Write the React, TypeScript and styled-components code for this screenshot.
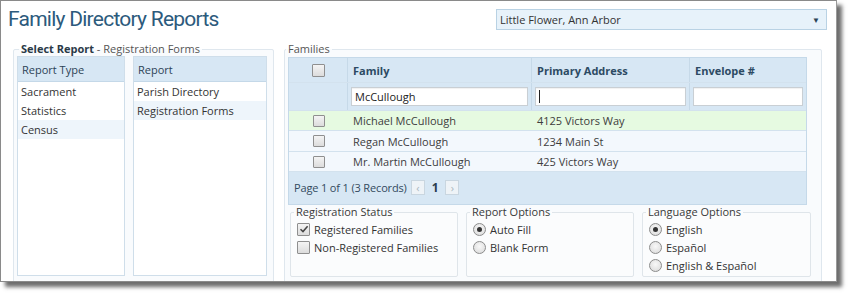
import React from "react";
import styled, { createGlobalStyle } from "styled-components";

const Global = createGlobalStyle`
  html, body { margin: 0; padding: 0; background: #ffffff; }
  body { font-family: "Open Sans", "Liberation Sans", sans-serif; font-size: 11px; color: #3a3a3a; }
  * { box-sizing: border-box; }
`;

const Stage = styled.div`
  width: 850px;
  height: 296px;
  padding: 0;
`;

const Window = styled.div`
  width: 837px;
  height: 282px;
  border: 1px solid #8a8a8a;
  border-right-color: #9a9a9a;
  background: #ffffff;
  box-shadow: 5px 5px 4px rgba(60, 60, 60, 0.75);
  overflow: hidden;
  display: flex;
  flex-direction: column;
`;

const Header = styled.div`
  height: 41px;
  display: flex;
  justify-content: space-between;
  align-items: flex-start;
  padding: 3px 9px 0 7px;
`;

const Title = styled.h1`
  margin: 0;
  font-family: "Roboto", "Open Sans", sans-serif;
  font-weight: 400;
  font-size: 21px;
  line-height: 30px;
  letter-spacing: -0.75px;
  color: #2c5a7c;
`;

const Select = styled.div`
  margin-top: 5px;
  width: 331px;
  height: 21px;
  border: 1px solid #b9d2e4;
  background: #e7f2fa;
  display: flex;
  align-items: center;
  justify-content: space-between;
  padding: 0 6px 0 3px;
  font-size: 11px;
  color: #333;
`;

const Arrow = styled.span`
  font-size: 8px;
  color: #2b4356;
`;

const Main = styled.div`
  flex: 1;
  display: flex;
  gap: 10px;
  padding: 0 0 0 12px;
  min-height: 0;
`;

const Fieldset = styled.fieldset<{ $w: number }>`
  margin: 0;
  width: ${(p) => p.$w}px;
  border: 1px solid #dfe7ee;
  border-radius: 2px;
  background: #f9fbfd;
  padding: 0 5px 10px 3px;
  display: flex;
  min-height: 260px;
`;

const Legend = styled.legend<{ $ml?: number }>`
  padding: 0 2px;
  margin-left: ${(p) => p.$ml ?? 3}px;
  font-size: 11px;
  line-height: 14px;
  color: #555;
  strong { color: #2a3a48; font-weight: 700; }
`;

const Lists = styled.div`
  display: flex;
  gap: 8px;
  height: 220px;
`;

const List = styled.div<{ $w: number }>`
  width: ${(p) => p.$w}px;
  border: 1px solid #cfdeea;
  background: #ffffff;
  display: flex;
  flex-direction: column;
`;

const ListHead = styled.div`
  height: 25px;
  background: #d7e7f4;
  border-bottom: 1px solid #c4d8e8;
  display: flex;
  align-items: center;
  padding: 0 4px;
  color: #2d4356;
  font-size: 11px;
`;

const ListBody = styled.div`
  display: flex;
  flex-direction: column;
`;

const ListItem = styled.div<{ $sel?: boolean }>`
  height: 19px;
  line-height: 19px;
  padding: 0 3px;
  background: ${(p) => (p.$sel ? "#eef5fb" : "transparent")};
  color: #333;
`;

const Right = styled.div`
  display: flex;
  flex-direction: column;
  width: 100%;
`;

const Table = styled.div`
  width: 519px;
  border: 1px solid #c5d9e9;
  margin-top: 1px;
  margin-left: 0;
`;

const Row = styled.div<{ $bg?: string; $h: number }>`
  display: grid;
  grid-template-columns: 59px 184px 158px 1fr;
  height: ${(p) => p.$h}px;
  background: ${(p) => p.$bg || "#f3f8fd"};
  border-bottom: 1px solid #d3e2ee;
`;

const HeadCell = styled.div<{ $center?: boolean }>`
  display: flex;
  align-items: center;
  justify-content: ${(p) => (p.$center ? "center" : "flex-start")};
  padding: 0 5px;
  font-weight: 700;
  color: #2c4a63;
  border-right: 1px solid #c6d9e8;
  &:last-child { border-right: none; }
`;

const FilterCell = styled.div`
  display: flex;
  align-items: center;
  padding: 0 3px;
  border-right: 1px solid #c6d9e8;
  &:last-child { border-right: none; }
`;

const Input = styled.div`
  width: 100%;
  height: 19px;
  background: #fff;
  border: 1px solid #c9cfd4;
  box-shadow: inset 0 1px 1px rgba(0, 0, 0, 0.06);
  display: flex;
  align-items: center;
  padding: 0 3px;
  color: #222;
`;

const Caret = styled.span`
  width: 1px;
  height: 13px;
  background: #222;
`;

const Cell = styled.div<{ $center?: boolean }>`
  display: flex;
  align-items: center;
  justify-content: ${(p) => (p.$center ? "center" : "flex-start")};
  padding: 0 5px;
  color: #3d3d3d;
`;

const Check = styled.span<{ $size?: number }>`
  width: ${(p) => p.$size || 12}px;
  height: ${(p) => p.$size || 12}px;
  border: 1px solid #8f8f8f;
  border-radius: 1px;
  background: linear-gradient(#f4f4f4, #dcdcdc);
  display: inline-flex;
  align-items: center;
  justify-content: center;
  flex-shrink: 0;
`;

const Pager = styled.div`
  height: 32px;
  background: #d7e7f4;
  display: flex;
  align-items: center;
  gap: 4px;
  padding: 0 4px 2px 5px;
  color: #334a5e;
  letter-spacing: -0.15px;
`;

const PageBtn = styled.span`
  width: 14px;
  height: 15px;
  border: 1px solid #c9d6e0;
  background: #eef3f7;
  color: #a9b6c0;
  font-size: 11px;
  display: inline-flex;
  align-items: center;
  justify-content: center;
`;

const PageNum = styled.span`
  font-weight: 700;
  font-size: 12px;
  color: #2a3d4e;
  padding: 0 3px;
`;

const Options = styled.div`
  display: flex;
  gap: 8px;
  margin-left: 2px;
  margin-top: 0;
`;

const OptBox = styled.fieldset<{ $w: number }>`
  margin: 0;
  width: ${(p) => p.$w}px;
  height: 72px;
  border: 1px solid #dfe5ea;
  border-radius: 2px;
  background: #fbfcfd;
  padding: 1px 6px 0 6px;
  display: flex;
  flex-direction: column;
`;

const OptLegend = styled.legend`
  padding: 0 2px;
  margin-left: -3px;
  font-size: 11px;
  color: #3a3a3a;
  line-height: 14px;
`;

const Option = styled.label`
  display: flex;
  align-items: center;
  gap: 4px;
  height: 18px;
  flex-shrink: 0;
  color: #333;
`;

const Radio = styled.span<{ $on?: boolean }>`
  width: 13px;
  height: 13px;
  border-radius: 50%;
  border: 1px solid #8c8c8c;
  background: radial-gradient(circle at 50% 40%, #f8f8f8, #d8d8d8);
  display: inline-flex;
  align-items: center;
  justify-content: center;
  &::after {
    content: "";
    display: ${(p) => (p.$on ? "block" : "none")};
    width: 5px;
    height: 5px;
    border-radius: 50%;
    background: #333;
  }
`;

const CheckMark = () => (
  <svg width="10" height="10" viewBox="0 0 10 10">
    <path d="M1.5 5.2 L4 7.6 L8.6 2.2" fill="none" stroke="#444" strokeWidth="1.5" />
  </svg>
);

const rows = [
  { name: "Michael McCullough", addr: "4125 Victors Way", bg: "#e6fae1", h: 20 },
  { name: "Regan McCullough", addr: "1234 Main St", bg: "#f3f8fd", h: 21 },
  { name: "Mr. Martin McCullough", addr: "425 Victors Way", bg: "#f3f8fd", h: 20 },
];

export default function App() {
  return (
    <Stage>
      <Global />
      <Window>
        <Header>
          <Title>Family Directory Reports</Title>
          <Select>
            <span>Little Flower, Ann Arbor</span>
            <Arrow>▼</Arrow>
          </Select>
        </Header>
        <Main>
          <Fieldset $w={261}>
            <Legend $ml={2}>
              <strong>Select Report</strong> - Registration Forms
            </Legend>
            <Lists>
              <List $w={108}>
                <ListHead>Report Type</ListHead>
                <ListBody>
                  <ListItem>Sacrament</ListItem>
                  <ListItem>Statistics</ListItem>
                  <ListItem $sel>Census</ListItem>
                </ListBody>
              </List>
              <List $w={134}>
                <ListHead>Report</ListHead>
                <ListBody>
                  <ListItem>Parish Directory</ListItem>
                  <ListItem $sel>Registration Forms</ListItem>
                </ListBody>
              </List>
            </Lists>
          </Fieldset>
          <Fieldset $w={538}>
            <Legend $ml={-2}>Families</Legend>
            <Right>
              <Table>
                <Row $h={25} $bg="#d7e7f4">
                  <HeadCell $center>
                    <Check $size={13} />
                  </HeadCell>
                  <HeadCell>Family</HeadCell>
                  <HeadCell>Primary Address</HeadCell>
                  <HeadCell>Envelope #</HeadCell>
                </Row>
                <Row $h={28} $bg="#d7e7f4">
                  <FilterCell />
                  <FilterCell>
                    <Input>McCullough</Input>
                  </FilterCell>
                  <FilterCell>
                    <Input>
                      <Caret />
                    </Input>
                  </FilterCell>
                  <FilterCell>
                    <Input />
                  </FilterCell>
                </Row>
                {rows.map((r) => (
                  <Row key={r.name} $h={r.h} $bg={r.bg}>
                    <Cell $center>
                      <Check />
                    </Cell>
                    <Cell>{r.name}</Cell>
                    <Cell>{r.addr}</Cell>
                    <Cell />
                  </Row>
                ))}
                <Pager>
                  <span>Page 1 of 1 (3 Records)</span>
                  <PageBtn>‹</PageBtn>
                  <PageNum>1</PageNum>
                  <PageBtn>›</PageBtn>
                </Pager>
              </Table>
              <Options>
                <OptBox $w={168}>
                  <OptLegend>Registration Status</OptLegend>
                  <Option>
                    <Check $size={13}>
                      <CheckMark />
                    </Check>
                    Registered Families
                  </Option>
                  <Option>
                    <Check $size={13} />
                    Non-Registered Families
                  </Option>
                </OptBox>
                <OptBox $w={168}>
                  <OptLegend>Report Options</OptLegend>
                  <Option>
                    <Radio $on />
                    Auto Fill
                  </Option>
                  <Option>
                    <Radio />
                    Blank Form
                  </Option>
                </OptBox>
                <OptBox $w={169}>
                  <OptLegend>Language Options</OptLegend>
                  <Option>
                    <Radio $on />
                    English
                  </Option>
                  <Option>
                    <Radio />
                    Español
                  </Option>
                  <Option>
                    <Radio />
                    English &amp; Español
                  </Option>
                </OptBox>
              </Options>
            </Right>
          </Fieldset>
        </Main>
      </Window>
    </Stage>
  );
}
